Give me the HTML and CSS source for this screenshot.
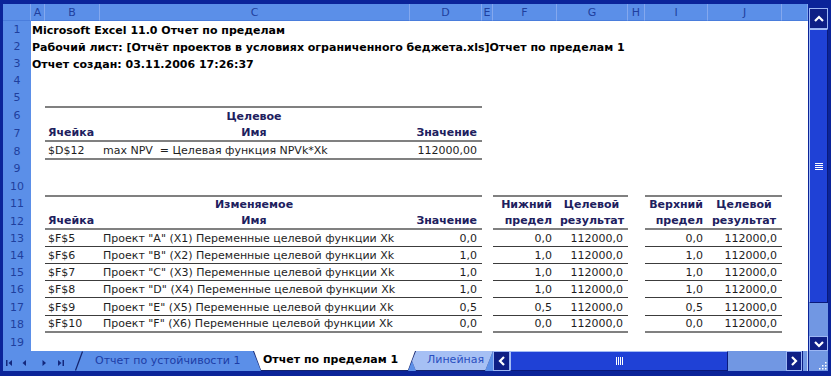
FILE: index.html
```html
<!DOCTYPE html>
<html lang="ru">
<head>
    <meta charset="UTF-8">
    <title>Отчет по пределам</title>
    <link rel="stylesheet" href="styles.css">
</head>
<body>
    <div class="excel">
        <!-- Sheet grid -->
        <div class="sheet-area">
            <table class="sheet">
                <colgroup>
                    <col class="w-rh"><col class="w-a"><col class="w-b"><col class="w-c"><col class="w-d"><col class="w-e">
                    <col class="w-f"><col class="w-g"><col class="w-h"><col class="w-i"><col class="w-j"><col class="w-rest">
                </colgroup>
                <thead>
                    <tr class="colhead">
                        <th></th><th>A</th><th>B</th><th>C</th><th>D</th><th>E</th>
                        <th>F</th><th>G</th><th>H</th><th>I</th><th>J</th><th></th>
                    </tr>
                </thead>
                <tbody>
                    <tr class="h17"><th>1</th><td colspan="11" class="title">Microsoft Excel 11.0 Отчет по пределам</td></tr>
                    <tr class="h17"><th>2</th><td colspan="11" class="title">Рабочий лист: [Отчёт проектов в условиях ограниченного беджета.xls]Отчет по пределам 1</td></tr>
                    <tr class="h17"><th>3</th><td colspan="11" class="title">Отчет создан: 03.11.2006 17:26:37</td></tr>
                    <tr class="h17"><th>4</th><td colspan="11"></td></tr>
                    <tr class="h17"><th>5</th><td colspan="11"></td></tr>

                    <tr class="h18"><th>6</th><td></td><td class="bt"></td><td class="bt hd ctr">Целевое</td><td class="bt"></td><td colspan="7"></td></tr>
                    <tr class="h18"><th>7</th><td></td><td class="bb hd">Ячейка</td><td class="bb hd ctr">Имя</td><td class="bb hd num">Значение</td><td colspan="7"></td></tr>
                    <tr class="h18"><th>8</th><td></td><td class="bb">$D$12</td><td class="bb">max NPV&nbsp; = Целевая функция NPVk*Xk</td><td class="bb num">112000,00</td><td colspan="7"></td></tr>
                    <tr class="h17"><th>9</th><td colspan="11"></td></tr>
                    <tr class="h18"><th>10</th><td colspan="11"></td></tr>

                    <tr class="h17"><th>11</th><td></td><td class="bt"></td><td class="bt hd ctr">Изменяемое</td><td class="bt"></td><td></td>
                        <td class="bt hd num">Нижний</td><td class="bt hd ctr">Целевой</td><td></td><td class="bt hd num">Верхний</td><td class="bt hd ctr">Целевой</td><td></td></tr>
                    <tr class="h18"><th>12</th><td></td><td class="bb hd">Ячейка</td><td class="bb hd ctr">Имя</td><td class="bb hd num">Значение</td><td></td>
                        <td class="bb hd num">предел</td><td class="bb hd ctr">результат</td><td></td><td class="bb hd num">предел</td><td class="bb hd ctr">результат</td><td></td></tr>

                    <tr class="h17"><th>13</th><td></td><td class="bl">$F$5</td><td class="bl">Проект "A" (X1) Переменные целевой функции Xk</td><td class="bl num">0,0</td><td></td>
                        <td class="bl num">0,0</td><td class="bl num">112000,0</td><td></td><td class="bl num">0,0</td><td class="bl num">112000,0</td><td></td></tr>
                    <tr class="h17"><th>14</th><td></td><td class="bl">$F$6</td><td class="bl">Проект "B" (X2) Переменные целевой функции Xk</td><td class="bl num">1,0</td><td></td>
                        <td class="bl num">1,0</td><td class="bl num">112000,0</td><td></td><td class="bl num">1,0</td><td class="bl num">112000,0</td><td></td></tr>
                    <tr class="h17"><th>15</th><td></td><td class="bl">$F$7</td><td class="bl">Проект "C" (X3) Переменные целевой функции Xk</td><td class="bl num">1,0</td><td></td>
                        <td class="bl num">1,0</td><td class="bl num">112000,0</td><td></td><td class="bl num">1,0</td><td class="bl num">112000,0</td><td></td></tr>
                    <tr class="h17"><th>16</th><td></td><td class="bl">$F$8</td><td class="bl">Проект "D" (X4) Переменные целевой функции Xk</td><td class="bl num">1,0</td><td></td>
                        <td class="bl num">1,0</td><td class="bl num">112000,0</td><td></td><td class="bl num">1,0</td><td class="bl num">112000,0</td><td></td></tr>
                    <tr class="h18"><th>17</th><td></td><td class="bl">$F$9</td><td class="bl">Проект "E" (X5) Переменные целевой функции Xk</td><td class="bl num">0,5</td><td></td>
                        <td class="bl num">0,5</td><td class="bl num">112000,0</td><td></td><td class="bl num">0,5</td><td class="bl num">112000,0</td><td></td></tr>
                    <tr class="h17"><th>18</th><td></td><td class="bb">$F$10</td><td class="bb">Проект "F" (X6) Переменные целевой функции Xk</td><td class="bb num">0,0</td><td></td>
                        <td class="bb num">0,0</td><td class="bb num">112000,0</td><td></td><td class="bb num">0,0</td><td class="bb num">112000,0</td><td></td></tr>
                    <tr class="h18"><th>19</th><td colspan="11"></td></tr>
                </tbody>
            </table>
        </div>

        <!-- Vertical scrollbar -->
        <div class="vscroll">
            <div class="sb-btn up">
                <svg width="12" height="8" viewBox="0 0 12 8"><path d="M2 6 L6 2 L10 6" fill="none" stroke="#fff" stroke-width="2.2"/></svg>
            </div>
            <div class="v-thumb">
                <svg width="8" height="7" viewBox="0 0 8 7"><g stroke="#fff" stroke-width="1"><path d="M0 0.5H8M0 2.5H8M0 4.5H8M0 6.5H8"/></g></svg>
            </div>
            <div class="v-track"></div>
            <div class="sb-btn down">
                <svg width="12" height="8" viewBox="0 0 12 8"><path d="M2 2 L6 6 L10 2" fill="none" stroke="#fff" stroke-width="2.2"/></svg>
            </div>
        </div>

        <!-- Sheet tabs and horizontal scrollbar -->
        <div class="tabbar">
            <div class="tab-nav">
                <svg width="72" height="20" viewBox="0 0 72 20">
                    <g fill="#14287c">
                        <rect x="3" y="9" width="1.5" height="6"/>
                        <path d="M9 9 L5.5 12 L9 15Z"/>
                        <path d="M23 9 L19.5 12 L23 15Z"/>
                        <path d="M39.5 9 L43 12 L39.5 15Z"/>
                        <path d="M55 9 L58.5 12 L55 15Z"/>
                        <rect x="59.5" y="9" width="1.5" height="6"/>
                    </g>
                </svg>
            </div>
            <div class="tabs">
                <svg class="tab-slash" width="8" height="20" viewBox="0 0 8 20"><path d="M0.5 19.5 L7.5 0.5" stroke="#14246e" stroke-width="1.2"/></svg>
                <div class="tab plain">Отчет по устойчивости 1</div>
                <div class="tab active"><span class="tab-face">Отчет по пределам 1</span></div>
                <div class="tab light"><span class="tab-face">Линейная</span></div>
            </div>
            <div class="hscroll">
                <div class="sb-btn left">
                    <svg width="8" height="12" viewBox="0 0 8 12"><path d="M6 2 L2 6 L6 10" fill="none" stroke="#fff" stroke-width="2.2"/></svg>
                </div>
                <div class="h-thumb">
                    <svg width="7" height="8" viewBox="0 0 7 8"><path d="M0.5 0V8M2.5 0V8M4.5 0V8M6.5 0V8" stroke="#fff" stroke-width="1"/></svg>
                </div>
                <div class="h-track"></div>
                <div class="sb-btn right">
                    <svg width="8" height="12" viewBox="0 0 8 12"><path d="M2 2 L6 6 L2 10" fill="none" stroke="#fff" stroke-width="2.2"/></svg>
                </div>
                <div class="h-split"></div>
            </div>
        </div>

        <div class="corner">
            <svg width="10" height="10" viewBox="0 0 10 10">
                <g fill="#fff">
                    <rect x="8" y="2" width="1.5" height="1.5"/>
                    <rect x="5" y="5" width="1.5" height="1.5"/><rect x="8" y="5" width="1.5" height="1.5"/>
                    <rect x="2" y="8" width="1.5" height="1.5"/><rect x="5" y="8" width="1.5" height="1.5"/><rect x="8" y="8" width="1.5" height="1.5"/>
                </g>
            </svg>
        </div>
    </div>
</body>
</html>
```

FILE: styles.css
```css
* {
    margin: 0;
    padding: 0;
    box-sizing: border-box;
}

body {
    background-color: #ffffff;
    font-family: "DejaVu Sans", sans-serif;
}

.excel {
    width: 831px;
    height: 376px;
    background-color: #0b2499;
    display: grid;
    grid-template-columns: 805px 20px;
    grid-template-rows: 347px 20px;
    padding: 4px 3px 5px 3px;
    overflow: hidden;
}

/* ---------- sheet ---------- */

.sheet-area {
    background-color: #ffffff;
    overflow: hidden;
}

.sheet {
    width: 805px;
    table-layout: fixed;
    border-collapse: separate;
    border-spacing: 0;
    font-size: 11px;
    line-height: 13px;
    color: #1e1e1e;
}

.w-rh { width: 28px; }
.w-a { width: 14px; }
.w-b { width: 55px; }
.w-c { width: 310px; }
.w-d { width: 72px; }
.w-e { width: 11px; }
.w-f { width: 64px; }
.w-g { width: 71px; }
.w-h { width: 17px; }
.w-i { width: 63px; }
.w-j { width: 74px; }
.w-rest { width: 26px; }

.colhead {
    height: 17px;
}

.colhead th {
    background-color: #5b8fe8;
    color: #1f3f9e;
    font-weight: normal;
    font-size: 11px;
    border-right: 1px solid #84a8ee;
    border-bottom: 1px solid #4a7ddc;
}

.sheet tbody th {
    background-color: #5b8fe8;
    color: #1f3f9e;
    font-weight: normal;
    font-size: 11px;
    text-align: center;
    vertical-align: middle;
}

.h17 { height: 17px; }
.h18 { height: 18px; }

.sheet td {
    padding: 0 5px 1px 3px;
    vertical-align: bottom;
    white-space: pre;
    overflow: visible;
}

.sheet td.title {
    font-weight: bold;
    color: #000000;
    padding-left: 1px;
}

.hd {
    font-weight: bold;
    color: #20205e;
}

.ctr { text-align: center; }
.num { text-align: right; }

.bt { border-top: 2px solid #808080; }
.bb { border-bottom: 2px solid #808080; }
.bl { border-bottom: 1px solid #3c3c3c; }

/* ---------- scrollbars ---------- */

.sb-btn {
    background-color: #0e1f86;
    border: 1px solid #9cb6f4;
    display: flex;
    align-items: center;
    justify-content: center;
}

.vscroll {
    display: flex;
    flex-direction: column;
    padding-top: 4px;
    padding-left: 1px;
}

.vscroll .up { height: 21px; }
.vscroll .down { height: 15px; }

.v-thumb {
    height: 274px;
    background-color: #1f41d6;
    border: 1px solid #a3bcf5;
    border-right-color: #0a1a7a;
    border-bottom-color: #0a1a7a;
    display: flex;
    align-items: center;
    justify-content: center;
}

.v-track {
    flex: 1;
    background-color: #7197e3;
}

.hscroll {
    width: 315px;
    display: flex;
}

.hscroll .sb-btn.left { width: 17px; }
.hscroll .sb-btn.right { width: 16px; }

.h-thumb {
    width: 218px;
    background-color: #1f41d6;
    border: 1px solid #a3bcf5;
    border-right-color: #0a1a7a;
    border-bottom-color: #0a1a7a;
    display: flex;
    align-items: center;
    justify-content: center;
}

.h-track {
    flex: 1;
    background-color: #7197e3;
}

.h-split {
    width: 6px;
    background-color: #7197e3;
    border-left: 1px solid #0e1f86;
    border-right: 1px solid #c4d4f8;
}

.corner {
    background-color: #7197e3;
    border-left: 1px solid #0e1f86;
    display: flex;
    align-items: flex-end;
    justify-content: flex-end;
    padding: 0 1px 1px 0;
}

/* ---------- sheet tabs ---------- */

.tabbar {
    display: flex;
    background-color: #5b8fe8;
    font-size: 11px;
}

.tab-nav {
    width: 72px;
    flex-shrink: 0;
}

.tabs {
    flex: 1;
    display: flex;
    overflow: hidden;
}

.tab-slash {
    flex-shrink: 0;
}

.tab {
    flex-shrink: 0;
    height: 20px;
    white-space: nowrap;
}

.tab.plain {
    width: 170px;
    padding-left: 12px;
    line-height: 20px;
    color: #1d3da6;
}

.tab.active,
.tab.light {
    background-color: #14246e;
    padding: 0 1px 1px 1px;
    clip-path: polygon(0 0, 100% 0, calc(100% - 8px) 100%, 8px 100%);
}

.tab-face {
    display: block;
    height: 100%;
    line-height: 18px;
    clip-path: polygon(0 0, 100% 0, calc(100% - 7px) 100%, 7px 100%);
}

.tab.active {
    width: 163px;
    position: relative;
    z-index: 2;
}

.tab.active .tab-face {
    background-color: #ffffff;
    color: #000000;
    font-weight: bold;
    padding-left: 9px;
}

.tab.light {
    flex: 1;
    margin-left: -8px;
    padding-right: 0;
}

.tab.light .tab-face {
    background-color: #a6c0f4;
    color: #2a4fc0;
    padding-left: 18px;
    clip-path: none;
}
```
